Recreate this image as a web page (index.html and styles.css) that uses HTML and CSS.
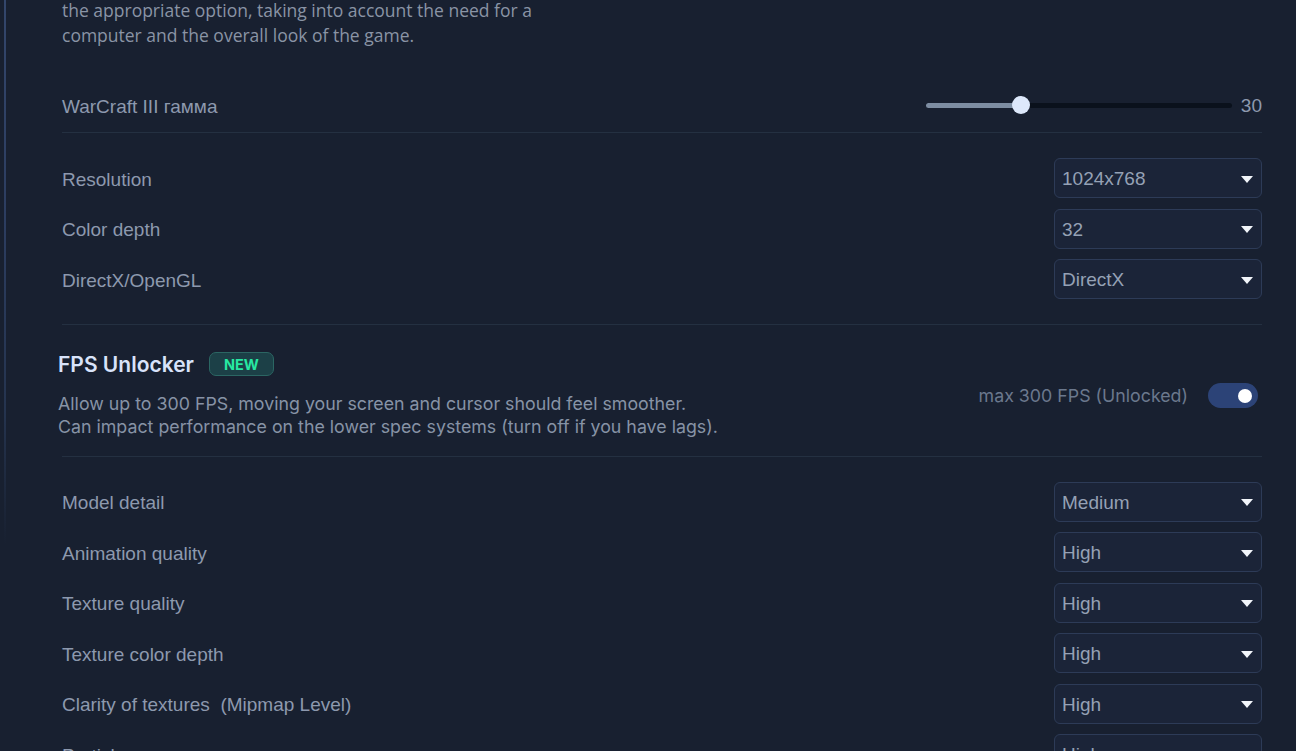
FILE: index.html
```html
<!DOCTYPE html>
<html lang="en">
<head>
<meta charset="utf-8">
<title>Graphics settings</title>
<link rel="stylesheet" href="styles.css">
</head>
<body>
<div class="page">
  <div class="rail"></div>
  <main class="content">
    <p class="intro">the appropriate option, taking into account the need for a<br>computer and the overall look of the game.</p>

    <div class="row slider-row">
      <span class="label">WarCraft III гамма</span>
      <div class="slider">
        <div class="track">
          <div class="fill" style="width:31%"></div>
          <div class="thumb" style="left:31%"></div>
        </div>
        <span class="value">30</span>
      </div>
    </div>

    <hr class="divider">

    <div class="group">
      <div class="row"><span class="label">Resolution</span><div class="select"><span>1024x768</span><i class="caret"></i></div></div>
      <div class="row"><span class="label">Color depth</span><div class="select"><span>32</span><i class="caret"></i></div></div>
      <div class="row"><span class="label">DirectX/OpenGL</span><div class="select"><span>DirectX</span><i class="caret"></i></div></div>
    </div>

    <hr class="divider">

    <section class="fps">
      <div class="fps-text">
        <div class="fps-title"><h3>FPS Unlocker</h3><span class="badge">NEW</span></div>
        <p class="fps-desc">Allow up to 300 FPS, moving your screen and cursor should feel smoother.<br>Can impact performance on the lower spec systems (turn off if you have lags).</p>
      </div>
      <div class="fps-control">
        <span class="fps-state">max 300 FPS (Unlocked)</span>
        <div class="toggle on"><div class="knob"></div></div>
      </div>
    </section>

    <hr class="divider">

    <div class="group">
      <div class="row"><span class="label">Model detail</span><div class="select"><span>Medium</span><i class="caret"></i></div></div>
      <div class="row"><span class="label">Animation quality</span><div class="select"><span>High</span><i class="caret"></i></div></div>
      <div class="row"><span class="label">Texture quality</span><div class="select"><span>High</span><i class="caret"></i></div></div>
      <div class="row"><span class="label">Texture color depth</span><div class="select"><span>High</span><i class="caret"></i></div></div>
      <div class="row"><span class="label">Clarity of textures&nbsp;&nbsp;(Mipmap Level)</span><div class="select"><span>High</span><i class="caret"></i></div></div>
      <div class="row"><span class="label">Particles</span><div class="select"><span>High</span><i class="caret"></i></div></div>
    </div>
  </main>
</div>
</body>
</html>
```

FILE: styles.css
```css
* { box-sizing: border-box; }
html, body {
  margin: 0;
  padding: 0;
  height: 100%;
  overflow: hidden;
  background: #182030;
}
.page {
  display: flex;
  height: 100%;
}
.rail {
  flex: 0 0 2px;
  width: 2px;
  margin-left: 4px;
  height: 545px;
  background: linear-gradient(to bottom, #33466b 0%, #2c3d60 40%, #25344f 75%, rgba(37,52,79,0) 100%);
}
.content {
  flex: 1;
  padding: 0 34px 0 56px;
}
.intro {
  margin: -2px 0 0;
  font-family: "Open Sans", sans-serif;
  font-size: 17.5px;
  line-height: 25px;
  color: #8a94a5;
}
.row {
  display: flex;
  align-items: center;
  justify-content: space-between;
  height: 40px;
}
.label {
  font-family: "Liberation Sans", Arial, sans-serif;
  font-size: 19px;
  color: #8d99ae;
  padding-top: 3px;
}
.slider-row { margin: 37px 0 7px; }
.slider {
  display: flex;
  align-items: center;
  gap: 9px;
}
.track {
  position: relative;
  width: 306px;
  height: 5px;
  border-radius: 3px;
  background: #0a111c;
}
.fill {
  height: 100%;
  border-radius: 3px;
  background: #7d8da2;
}
.thumb {
  position: absolute;
  top: 50%;
  width: 18px;
  height: 18px;
  margin: -9px 0 0 -9px;
  border-radius: 50%;
  background: #dde8fb;
}
.value {
  font-family: "Liberation Sans", Arial, sans-serif;
  font-size: 19px;
  color: #8d99ae;
  padding-top: 2px;
}
.divider {
  border: 0;
  height: 1px;
  background: #243041;
  margin: 0;
}
.group {
  display: flex;
  flex-direction: column;
  gap: 10.5px;
  padding: 25px 0;
}
.select {
  width: 208px;
  height: 40px;
  display: flex;
  align-items: center;
  justify-content: space-between;
  padding: 0 8px 0 7px;
  border: 1px solid #2d3b57;
  border-radius: 6px;
  background: #1b2438;
  font-family: "Liberation Sans", Arial, sans-serif;
  font-size: 19px;
  color: #95a1b5;
}
.select span { padding-top: 2px; }
.caret {
  width: 0;
  height: 0;
  border-left: 6.5px solid transparent;
  border-right: 6.5px solid transparent;
  border-top: 7px solid #f2f5fa;
  margin-top: 2px;
}
.fps {
  display: flex;
  align-items: center;
  justify-content: space-between;
  margin-left: -4px;
  padding: 27px 4px 18px 0;
  font-family: Inter, sans-serif;
}
.fps-title {
  display: flex;
  align-items: center;
  gap: 15px;
  height: 24px;
}
.fps-title h3 {
  margin: 0;
  font-size: 21px;
  font-weight: 600;
  color: #d8e3fa;
}
.badge {
  display: inline-flex;
  align-items: center;
  justify-content: center;
  width: 65px;
  height: 24px;
  border: 1px solid #2b6663;
  border-radius: 7px;
  background: #1c4047;
  color: #27e8a2;
  font-size: 14.5px;
  font-weight: 700;
}
.fps-desc {
  margin: 15.5px 0 0;
  font-size: 17.8px;
  line-height: 23px;
  color: #8793a6;
}
.fps-control {
  display: flex;
  align-items: center;
  gap: 20px;
  padding-top: 2px;
}
.fps-state {
  font-size: 17.8px;
  color: #6b788d;
}
.toggle {
  width: 50px;
  height: 25px;
  border-radius: 13px;
  background: #2c4377;
  display: flex;
  align-items: center;
  justify-content: flex-end;
  padding-right: 6px;
}
.knob {
  width: 14px;
  height: 14px;
  border-radius: 50%;
  background: #ffffff;
}
```
